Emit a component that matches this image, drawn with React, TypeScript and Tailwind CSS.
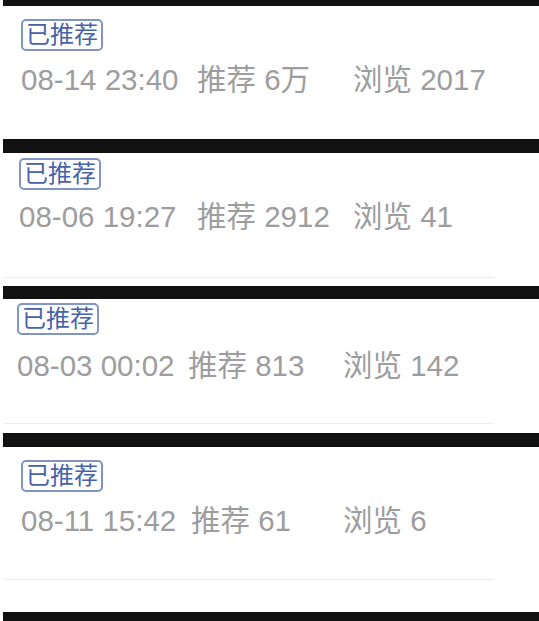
import React from "react";

type Row = {
  date: string;
  rec: string;
  view: string;
  secCls: string;
  padCls: string;
  rowCls: string;
  dateCls: string;
  recCls: string;
  line: boolean;
  lineCls: string;
};

const rows: Row[] = [
  {
    date: "08-14 23:40",
    rec: "6万",
    view: "2017",
    secCls: "h-[133px]",
    padCls: "pl-[21px] pt-[13px]",
    rowCls: "mt-[14px]",
    dateCls: "w-[176px]",
    recCls: "w-[156px]",
    line: false,
    lineCls: "",
  },
  {
    date: "08-06 19:27",
    rec: "2912",
    view: "41",
    secCls: "h-[133px]",
    padCls: "pl-[19px] pt-[5px]",
    rowCls: "mt-[12px]",
    dateCls: "w-[178px]",
    recCls: "w-[156px]",
    line: true,
    lineCls: "mt-[45px]",
  },
  {
    date: "08-03 00:02",
    rec: "813",
    view: "142",
    secCls: "h-[134px]",
    padCls: "pl-[17px] pt-[4px]",
    rowCls: "mt-[16px]",
    dateCls: "w-[171px]",
    recCls: "w-[155px]",
    line: true,
    lineCls: "mt-[42px]",
  },
  {
    date: "08-11 15:42",
    rec: "61",
    view: "6",
    secCls: "h-[165px]",
    padCls: "pl-[21px] pt-[13px]",
    rowCls: "mt-[14px]",
    dateCls: "w-[170px]",
    recCls: "w-[152px]",
    line: true,
    lineCls: "mt-[43px]",
  },
];

const font = {
  fontFamily: '"Liberation Sans", "Noto Sans CJK SC", sans-serif',
};

function Bar({ cls }: { cls: string }) {
  return <div className={`ml-[3px] bg-[#111111] ${cls}`} />;
}

function Section({ r }: { r: Row }) {
  return (
    <div className={`relative bg-white ${r.secCls}`}>
      <div className={`flex flex-col ${r.padCls}`}>
        <div className="flex">
          <span className="rounded-[5px] border-2 border-[#8194c7] px-[3px] text-[24px] leading-[28px] text-[#4862a9]">
            已推荐
          </span>
        </div>
        <div className={`flex whitespace-nowrap text-[29.5px] leading-[30px] text-[#9d9d9d] ${r.rowCls}`}>
          <span className={r.dateCls}>{r.date}</span>
          <span className={r.recCls}>推荐 {r.rec}</span>
          <span>浏览 {r.view}</span>
        </div>
      </div>
      {r.line && (
        <div className={`ml-[4px] h-px w-[490px] bg-[#ececec] ${r.lineCls}`} />
      )}
    </div>
  );
}

export default function App() {
  return (
    <div className="h-[621px] w-[539px] overflow-hidden bg-white" style={font}>
      <Bar cls="h-[6px]" />
      <Section r={rows[0]} />
      <Bar cls="h-[14px]" />
      <Section r={rows[1]} />
      <Bar cls="h-[13px]" />
      <Section r={rows[2]} />
      <Bar cls="h-[14px]" />
      <Section r={rows[3]} />
      <Bar cls="h-[9px]" />
    </div>
  );
}
